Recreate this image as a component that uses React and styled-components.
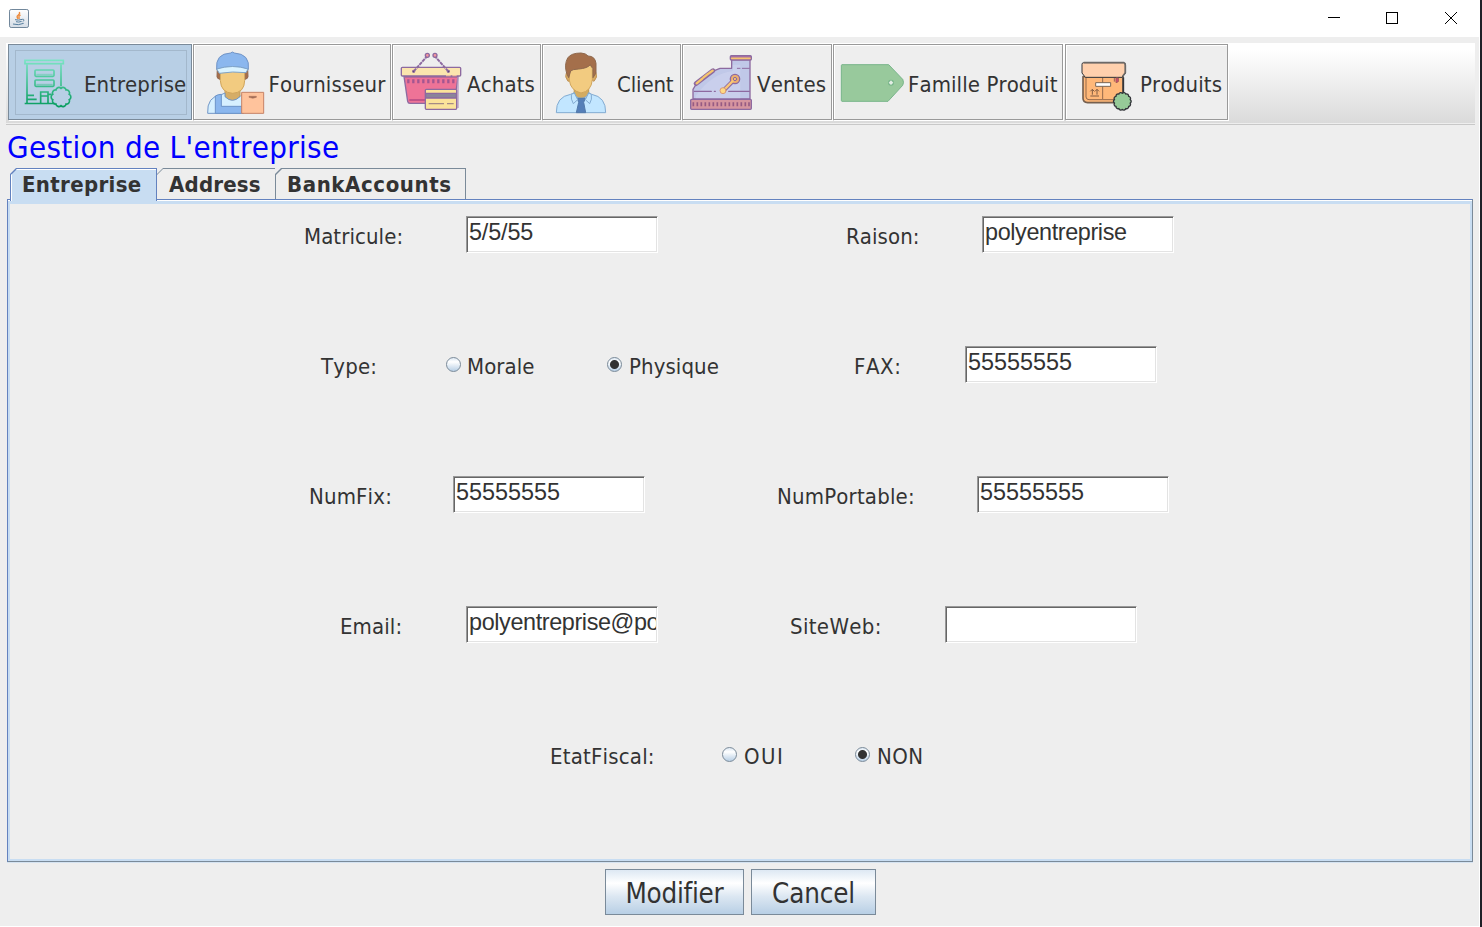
import React from "react";
import styled, { createGlobalStyle, css } from "styled-components";

const GlobalStyle = createGlobalStyle`
  * { box-sizing: border-box; }
  html, body { margin: 0; padding: 0; }
  body {
    width: 1482px; height: 927px; overflow: hidden; background: #1f1f26;
    font-family: "DejaVu Sans Condensed", "DejaVu Sans", sans-serif; font-stretch: condensed;
    font-size: 22px; color: #333; font-kerning: none;
  }
`;

const Frame = styled.div`
  width: 1480px; height: 927px; display: flex; flex-direction: column;
  background: #eee; border-right: 1px solid #fff; border-bottom: 1px solid #fff;
`;
const TitleBar = styled.header`
  height: 37px; flex: none; background: #fff; display: flex; align-items: center;
  justify-content: space-between; padding: 0 22px 0 9px;
`;
const WindowControls = styled.div`
  display: flex; gap: 46px; height: 37px; align-items: center; padding-right: 0;
  svg { position: relative; left: -1px; top: -1px; }
  svg:last-child { left: 0; top: -1px; }
`;
const ToolBar = styled.nav`
  margin: 6px 4px 0 6px; height: 82px; flex: none; display: flex; align-items: flex-start;
  padding: 1px 0 0 2px; border-bottom: 1px solid #c8c8c8;
  background: linear-gradient(#fff 0, #fff 6px, #dadada 80px, #eee 80px);
`;
const Tool = styled.button`
  font: inherit; color: inherit; text-align: left; position: relative;
  width: ${(p) => p.$width}px; height: 76px; flex: none; margin: 0 ${(p) => p.$after || 1}px 0 0;
  padding: 0 0 0 ${(p) => p.$inset}px; display: flex; align-items: center; gap: ${(p) => p.$gap}px;
  border: 1px solid #999; background: #eee;
  box-shadow: inset 1px 1px #fff, 1px 1px #fff, 0 -1px #fff, 1px 0 #fff;
  ${(p) => p.$active && css`
    border-color: #7a8a99; background: #b8cfe5; box-shadow: 1px 1px #fff;
    &::after {
      content: ""; position: absolute; inset: 5px 4px 4px 6px; border: 1px solid #a3b8cc;
    }
  `}
`;
const ToolText = styled.span`
  position: relative; top: 3px; line-height: 26px; white-space: nowrap;
  letter-spacing: ${(p) => p.$track}px;
`;
const IconSvg = styled.svg`
  width: 66px; height: 72px; flex: none; display: block;
`;
const Heading = styled.h1`
  margin: 0; padding: 4px 0 0 7px; height: 43px; flex: none; color: #00f;
  font-size: 31px; font-weight: 400; line-height: 36px; letter-spacing: 0.3px; white-space: nowrap;
`;
const TabStrip = styled.div`
  height: 31px; flex: none; padding-left: 10px; display: flex; align-items: flex-start;
`;
const cut = css`clip-path: polygon(6px 0, 100% 0, 100% 100%, 0 100%, 0 6px);`;
const Tab = styled.div`
  width: ${(p) => p.$width}px; height: ${(p) => (p.$active ? 33 : 31)}px; flex: none;
  padding: 1px ${(p) => (p.$open ? 0 : 1)}px 0 ${(p) => (p.$joined ? 0 : 1)}px;
  background: ${(p) => (p.$active ? "#6382bf" : "#7a8a99")};
  position: relative; z-index: ${(p) => (p.$active ? 2 : 1)};
  ${cut}
`;
const TabFace = styled.div`
  height: 100%; padding: 1px 0 0 ${(p) => p.$inset}px; font-weight: 700; line-height: 30px; white-space: nowrap;
  letter-spacing: ${(p) => p.$track}px;
  background: ${(p) => (p.$active ? "#c8ddf2" : "#eee")};
  box-shadow: ${(p) => (p.$active ? "inset 1px 1px #fff" : "none")};
  ${cut}
`;
const Panel = styled.main`
  margin: 0 6px 0 7px; height: 663px; flex: none; border: 1px solid #7a8a99;
  border-top-color: #6382bf; border-left-color: #6382bf;
  box-shadow: inset 0 1px #fff, inset 0 4px #c8ddf2, inset 0 0 0 2px #c8ddf2, 0 1px #d5e3f1;
  padding: 16px 0 0;
`;
const FormRow = styled.div`
  height: 130px; display: flex; align-items: flex-start; padding-left: ${(p) => p.$indent}px;
`;
const Label = styled.label`
  width: ${(p) => p.$width}px; flex: none; padding: 7px 0 0 1px; line-height: 28px; white-space: nowrap;
  letter-spacing: ${(p) => p.$track ?? 0.08}px;
`;
const Field = styled.input`
  width: 192px; height: 37px; flex: none; margin: 0 ${(p) => p.$after || 0}px 0 0; padding: 0 1px 5px 2px;
  border: 1px solid; border-color: #999 #fff #fff #999; outline: 0; background: #fff; color: #333;
  box-shadow: inset 1px 1px #666, inset -1px -1px #e3e3e3;
  font: 23.4px/30px "Liberation Sans", Arial, sans-serif; letter-spacing: ${(p) => p.$track || 0}px;
`;
const Choice = styled.label`
  width: ${(p) => p.$width}px; flex: none; padding-top: 7px; display: flex; gap: ${(p) => p.$gap || 7}px;
  line-height: 28px; white-space: nowrap; letter-spacing: ${(p) => p.$track ?? 0.08}px;
`;
const Dot = styled.span`
  width: 15px; height: 15px; margin-top: 4px; flex: none; border-radius: 50%; border: 1px solid #7a8a99;
  background: ${(p) => (p.$on
    ? "radial-gradient(circle, #333 0 4px, transparent 5px), "
    : "")}linear-gradient(#dde8f3, #fff 30%, #b8cfe5);
`;
const Actions = styled.footer`
  display: flex; gap: 7px; padding: 7px 0 0 605px;
`;
const Action = styled.button`
  width: ${(p) => p.$width}px; height: 46px; margin: 0; padding: 2px 0 0; color: #333;
  border: 1px solid #7a8a99; background: linear-gradient(#dde8f3, #fff 30%, #dce7f2 60%, #b8cfe5);
  font: inherit; font-size: 27.5px; line-height: 34px; letter-spacing: ${(p) => p.$track}px;
`;

const scallop = (cx, cy, r, n, depth) => {
  const pts = [];
  for (let i = 0; i <= n; i++) {
    const a = (i / n) * Math.PI * 2 - Math.PI / 2;
    pts.push([cx + r * Math.cos(a), cy + r * Math.sin(a)]);
  }
  return pts
    .map(([x, y], i) => (i ? `A${depth} ${depth} 0 0 1 ${x.toFixed(1)} ${y.toFixed(1)}` : `M${x.toFixed(1)} ${y.toFixed(1)}`))
    .join("") + "Z";
};

const CompanyIcon = () => (
  <IconSvg viewBox="48 138 198 216" fill="none" stroke="url(#green)" strokeWidth="5">
    <defs>
      <linearGradient id="green" gradientUnits="userSpaceOnUse" x1="0" y1="178" x2="0" y2="322">
        <stop offset="0" stopColor="#7ce5c6" /><stop offset="1" stopColor="#079c5e" />
      </linearGradient>
    </defs>
    <rect x="75" y="181" width="115" height="10" />
    <path d="M81 193V310M183 193V259M74 310.5H166" />
    <rect x="105" y="210" width="57" height="19" rx="3" />
    <rect x="105" y="240" width="57" height="19" rx="3" />
    <path d="M109 223H158M109 253H158" strokeWidth="3" opacity=".6" />
    <path d="M122 309V276H144V309M122 288H144M144 283H155M81 286H102M81 298H110" />
    <path d={scallop(183, 291, 26, 10, 9)} />
  </IconSvg>
);

const SupplierIcon = () => (
  <IconSvg viewBox="30 24 198 216" strokeWidth="3" strokeLinejoin="round">
    <path d="M82 92L81 116Q81 122 90 124V98ZM173 92L174 116Q174 122 165 124V98Z" fill="#a86d49" stroke="#8f674e" />
    <path d="M105 150H150V176Q128 202 105 176Z" fill="#d5ad67" stroke="#c39b58" />
    <path d="M91 98H164V128Q163 164 128 166Q93 164 91 128Z" fill="#f2cb80" stroke="#d0a55c" />
    <path d="M53 226Q50 176 94 170L105 165V176Q127 198 150 176L160 166V226Z" fill="#d6f0ff" stroke="#7296c7" />
    <path d="M76 226V174Q84 169 94 169V205H160V226Z" fill="#8bb7ee" stroke="#6d94c8" />
    <path d="M80 94Q75 47 122 45Q126 39 133 45Q181 48 175 94Q128 79 80 94Z" fill="#8bb7ee" stroke="#7194c6" />
    <path d="M80 93Q128 78 174 93L168 104Q128 99 88 106Z" fill="#daf3ff" stroke="#7fa4c9" />
    <rect x="155" y="163" width="66" height="63" fill="#ffc39c" stroke="#c68367" />
    <path d="M177 175H199V178Q188 183 177 178Z" fill="#996955" stroke="#b7785d" strokeWidth="2" />
  </IconSvg>
);

const BasketIcon = () => (
  <IconSvg viewBox="24 24 198 216" stroke="#8d6aa0" strokeWidth="4" strokeLinejoin="round">
    <path d="M42 115H204L194 193Q193 196 188 196H60Q54 196 53 190Z" fill="#ee7397" />
    <path d="M58 186H105" stroke="#b84d86" strokeWidth="5" />
    <path d="M44 117H202" stroke="#a86599" strokeWidth="4" />
    <path d="M55 124V136M70 124V136M85 124V136M100 124V136M115 124V136M130 124V136M145 124V136M160 124V136M175 124V136M190 124V136" strokeWidth="7" stroke="#a35691" />
    <rect x="34" y="88" width="178" height="26" rx="3" fill="#fbe5ae" />
    <path d="M168 113H182M187 113H200" stroke="#f0bd9d" />
    <path d="M71 100L112 54M175 100L134 54" fill="none" strokeWidth="6" strokeDasharray="11 2" />
    <circle cx="112" cy="52" r="6" fill="#f5959d" /><circle cx="135" cy="52" r="6" fill="#f5959d" />
    <circle cx="71" cy="100" r="3" /><circle cx="175" cy="100" r="3" />
    <path d="M204 118V210" stroke="#b79cc4" strokeWidth="4" />
    <rect x="106" y="154" width="94" height="60" rx="3" fill="#fbe39a" />
    <path d="M107 166H199V180H107Z" fill="#8b8499" />
    <path d="M116 197H162M171 197H191" stroke="#a58b85" />
  </IconSvg>
);

const ClientIcon = () => (
  <IconSvg viewBox="30 24 198 216" strokeWidth="3" strokeLinejoin="round">
    <path d="M103 150H146V175L124 188L102 175Z" fill="#d3ac62" stroke="#bc9851" />
    <path d="M79 105Q73 116 84 130L90 128V97ZM168 104Q174 117 162 130L155 125V96Z" fill="#d6aa64" stroke="#c19357" />
    <path d="M88 88Q108 96 152 77L157 91V125Q154 160 123 165Q92 158 88 127Z" fill="#f2cb80" stroke="#d0a55c" />
    <path d="M80 106Q72 80 83 60Q93 45 123 45Q138 46 144 54Q165 54 168 76V105L159 119V91Q152 86 151 80Q142 91 116 93Q96 94 92 99L86 119Z" fill="#a46f4b" stroke="#8f694e" />
    <path d="M49 224Q48 176 92 169L103 164Q106 180 123 181Q141 180 146 164L155 169Q198 177 197 224Z" fill="#c2e6ff" stroke="#83abd1" />
    <path d="M112 181H136L131 193L137 224H109L116 193Z" fill="#557fb8" stroke="#5279aa" />
    <path d="M94 169Q92 184 100 197L113 185L103 165ZM154 169Q157 184 149 197L136 185L146 165Z" fill="#c2e6ff" stroke="#83abd1" />
  </IconSvg>
);

const RegisterIcon = () => (
  <IconSvg viewBox="24 24 198 216" stroke="#8d6aa0" strokeWidth="4" strokeLinejoin="round" strokeLinecap="round">
    <path d="M39 183V154L47 141L103 98L120 91H155V65H210V183Z" fill="#c0c8e8" />
    <path d="M47 174Q96 106 158 99V80H181V181H47Z" fill="#cfd5ef" stroke="none" opacity=".55" />
    <rect x="151" y="53" width="63" height="13" rx="3" fill="#a970a4" />
    <path d="M155 61H210" stroke="#f5c36f" strokeWidth="5" />
    <path d="M172 91H180M187 91H208" strokeWidth="3" />
    <path d="M48 137L99 98" strokeWidth="14" />
    <path d="M50 136L67 122M70 119L85 107M88 105L98 98" stroke="#f5c66d" strokeWidth="7" />
    <path d="M43 160H94M103 160H106M146 160H208" />
    <path d="M130 158L164 124" strokeWidth="13" />
    <circle cx="165" cy="123" r="14" fill="#edaf6d" />
    <path d="M130 158L164 123" stroke="#fac775" strokeWidth="7" />
    <circle cx="165" cy="123" r="5" fill="#f4c076" strokeWidth="3" />
    <circle cx="129" cy="158" r="9" fill="#ffd982" stroke="#d79a78" strokeWidth="3" />
    <rect x="32" y="184" width="182" height="30" rx="3" fill="#d6959f" />
    <path d="M40 193V205M52 193V205M64 193V205M76 193V205M88 193V205M100 193V205M112 193V205M124 193V205M136 193V205M148 193V205M160 193V205M172 193V205M184 193V205M196 193V205M207 193V205" stroke="#965b83" strokeWidth="5" strokeLinecap="butt" />
  </IconSvg>
);

const TagIcon = () => (
  <IconSvg viewBox="24 24 198 216" strokeWidth="3">
    <path d="M36 80H176L218 124Q223 133 218 142L174 190H36Q34 190 34 187V83Q34 80 36 80Z" fill="#98c99c" stroke="#78b58a" />
    <circle cx="183" cy="134" r="9" fill="#78b58a" stroke="none" />
    <path d="M183 127L190 134L183 141L176 134Z" fill="#e4eee5" stroke="none" />
  </IconSvg>
);

const BoxIcon = () => (
  <IconSvg viewBox="36 24 198 216" stroke="#33353a" strokeWidth="3" strokeLinejoin="round">
    <path d="M69 116H189V183L177 194H83Q69 193 69 181Z" fill="#ffb879" stroke="#76604f" strokeWidth="5" />
    <path d="M78 118V177Q79 185 87 185H167M128 118V183" fill="none" stroke="#94694b" />
    <path d="M190 118V169" strokeWidth="5" />
    <path d="M71 74H191Q196 76 196 81V106L186 118H76L66 105V79Q66 74 71 74Z" fill="#ffd0ad" />
    <path d="M71 74H192Q197 76 196 82V104L188 115" fill="none" stroke="#6c6967" strokeWidth="5" />
    <rect x="107" y="134" width="45" height="11" fill="#fff" stroke="#7b6554" />
    <path d="M163 120V131M168 120V134L175 131V120Z" fill="#d64872" stroke="#a25c58" />
    <path d="M97 170V154M91 160L97 154L103 160M111 170V154M105 160L111 154L117 160M91 174H117" fill="none" stroke="#805b42" />
    <path d={scallop(187, 190, 24, 14, 6)} fill="#96ca98" strokeWidth="4" />
  </IconSvg>
);

const JavaIcon = () => (
  <svg width="20" height="20" viewBox="0 0 60 60" fill="none">
    <defs>
      <linearGradient id="tile" x1="0" y1="0" x2="0" y2="1">
        <stop offset="0" stopColor="#fff" /><stop offset="1" stopColor="#d5dde6" />
      </linearGradient>
    </defs>
    <rect x="1.5" y="1.5" width="57" height="54" rx="5" fill="url(#tile)" stroke="#71879b" strokeWidth="3" />
    <path d="M31 9Q34 15 27 19Q21 23 28 30M35 18Q26 22 32 29" stroke="#ed8a3b" strokeWidth="4" />
    <path d="M18 32Q28 35 40 31M21 38Q29 41 38 37M12 45Q28 50 44 43M40 31Q50 31 41 38" stroke="#567e9e" strokeWidth="3" />
  </svg>
);

const tools = [
  { name: "Entreprise", Icon: CompanyIcon, width: 184, inset: 7, gap: 2, track: 0.04, active: true },
  { name: "Fournisseur", Icon: SupplierIcon, width: 198, inset: 6, gap: 2.5, track: 0.12 },
  { name: "Achats", Icon: BasketIcon, width: 149, inset: 5, gap: 3, track: 0.15 },
  { name: "Client", Icon: ClientIcon, width: 139, inset: 7, gap: 1, track: -0.15 },
  { name: "Ventes", Icon: RegisterIcon, width: 150, inset: 5, gap: 3, track: 0.1 },
  { name: "Famille Produit", Icon: TagIcon, width: 230, inset: 4, gap: 4, track: 0.08, after: 2 },
  { name: "Produits", Icon: BoxIcon, width: 163, inset: 6, gap: 2, track: 0.18 },
];

export default function App() {
  return (
    <>
      <GlobalStyle />
      <Frame>
        <TitleBar>
          <JavaIcon />
          <WindowControls>
            <svg width="12" height="12"><path d="M0 5.5H12" stroke="#000" /></svg>
            <svg width="12" height="12"><rect x=".5" y=".5" width="11" height="11" fill="none" stroke="#000" /></svg>
            <svg width="12" height="12"><path d="M0 0L12 12M12 0L0 12" stroke="#000" /></svg>
          </WindowControls>
        </TitleBar>
        <ToolBar>
          {tools.map(({ name, Icon, width, inset, gap, track, active, after }) => (
            <Tool key={name} $width={width} $inset={inset} $gap={gap} $active={active} $after={after}>
              <Icon />
              <ToolText $track={track}>{name}</ToolText>
            </Tool>
          ))}
        </ToolBar>
        <Heading>Gestion de L'entreprise</Heading>
        <TabStrip>
          <Tab $width={147} $active><TabFace $inset={11} $track={0.33} $active>Entreprise</TabFace></Tab>
          <Tab $width={118} $open $joined><TabFace $inset={12} $track={0.2}>Address</TabFace></Tab>
          <Tab $width={191}><TabFace $inset={11} $track={0.6}>BankAccounts</TabFace></Tab>
        </TabStrip>
        <Panel>
          <FormRow $indent={295}>
            <Label $width={163}>Matricule:</Label>
            <Field $after={187} defaultValue="5/5/55" $track={-0.15} />
            <Label $width={137}>Raison:</Label>
            <Field defaultValue="polyentreprise" $track={-0.38} />
          </FormRow>
          <FormRow $indent={312}>
            <Label $width={126} $track={0.2}>Type:</Label>
            <Choice $width={161} $gap={6}><Dot />Morale</Choice>
            <Choice $width={246}><Dot $on />Physique</Choice>
            <Label $width={112} $track={0.6}>FAX:</Label>
            <Field defaultValue="55555555" />
          </FormRow>
          <FormRow $indent={300}>
            <Label $width={145} $track={0.15}>NumFix:</Label>
            <Field $after={131} defaultValue="55555555" />
            <Label $width={201} $track={0.18}>NumPortable:</Label>
            <Field defaultValue="55555555" />
          </FormRow>
          <FormRow $indent={331}>
            <Label $width={127} $track={0.1}>Email:</Label>
            <Field $after={131} defaultValue="polyentreprise@poly.com" $track={-0.38} />
            <Label $width={156} $track={0.35}>SiteWeb:</Label>
            <Field defaultValue="" />
          </FormRow>
          <FormRow $indent={541}>
            <Label $width={173} $track={0.2}>EtatFiscal:</Label>
            <Choice $width={133} $track={1.5}><Dot />OUI</Choice>
            <Choice $width={90} $track={0.4}><Dot $on />NON</Choice>
          </FormRow>
        </Panel>
        <Actions>
          <Action $width={139} $track={-0.25}>Modifier</Action>
          <Action $width={125} $track={-0.15}>Cancel</Action>
        </Actions>
      </Frame>
    </>
  );
}
